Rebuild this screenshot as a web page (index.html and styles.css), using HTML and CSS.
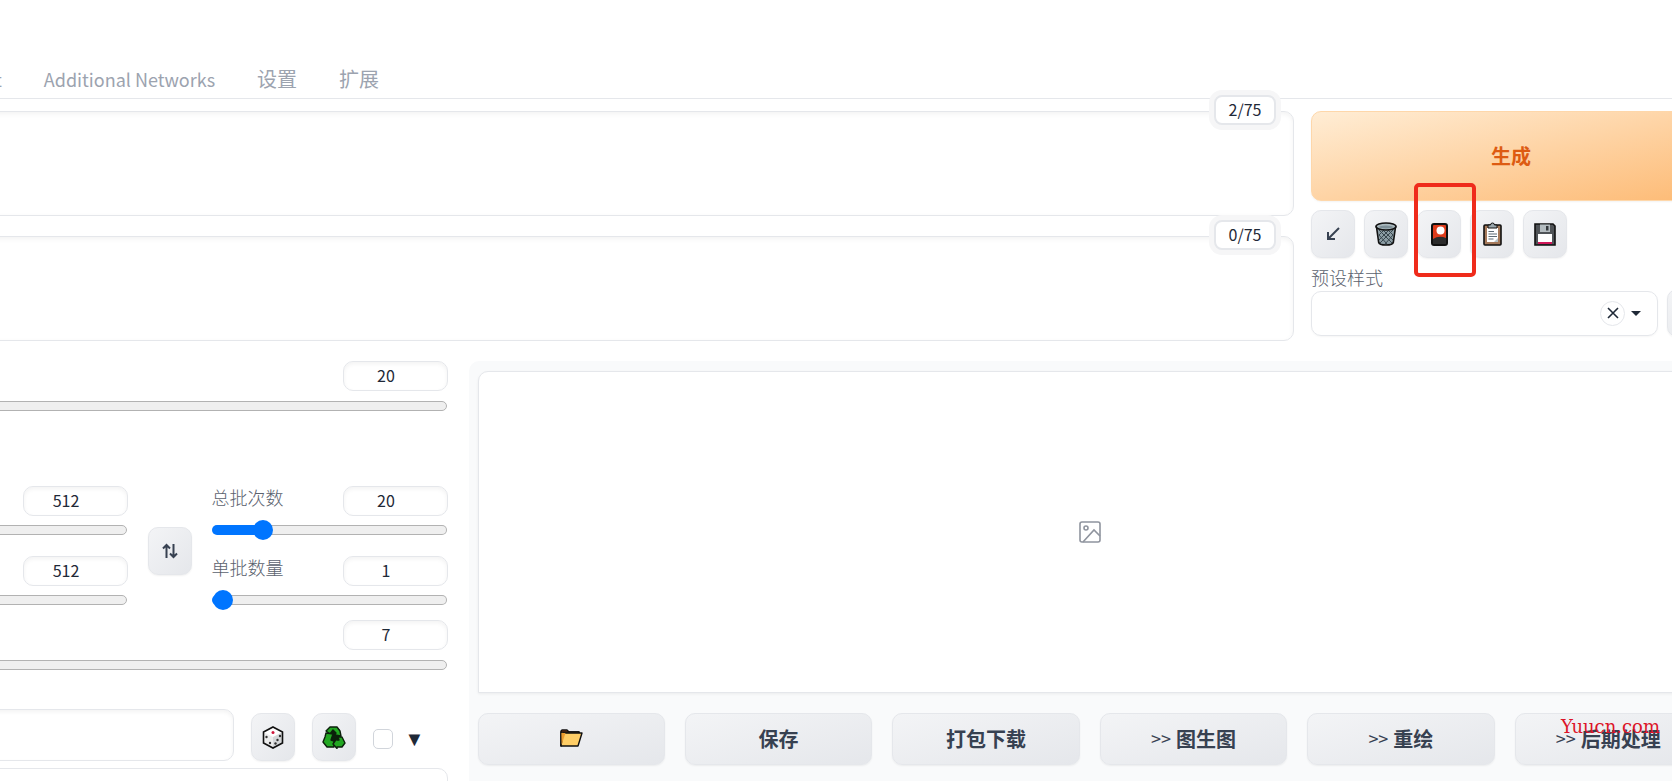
FILE: index.html
```html
<!DOCTYPE html>
<html lang="zh-CN">
<head>
<meta charset="UTF-8" />
<meta name="viewport" content="width=device-width, initial-scale=1" />
<title>Stable Diffusion</title>
<link rel="stylesheet" href="styles.css">
</head>
<body>

<div class="app">
  <nav class="tabs">
    <button class="latin">t</button>
    <button class="latin">Additional Networks</button>
    <button>设置</button>
    <button>扩展</button>
  </nav>

  <div class="top">
    <div class="prompts">
      <div class="prompt">
        <textarea aria-label="正向提示词"></textarea>
        <span class="counter">2/75</span>
      </div>
      <div class="prompt">
        <textarea aria-label="反向提示词"></textarea>
        <span class="counter">0/75</span>
      </div>
    </div>

    <div class="actions">
      <button class="generate">生成</button>
      <div class="tools">
        <button class="tool" aria-label="读取参数">
          <svg width="14" height="14" viewBox="0 0 14 14" fill="none" stroke="#374151" stroke-width="2"><path d="M13 1L3 11"/><path d="M2 5v7h7"/></svg>
        </button>
        <button class="tool" aria-label="清空">
          <svg width="22" height="24" viewBox="0 0 22 24"><path d="M1.500 5l2.200 15.500q.5 2.500 7.300 2.500t7.300-2.500L20.500 5z" fill="#8b9ca3" stroke="#111" stroke-width="1.600"/><path d="M4 8l13 13M8 8l10 10M13 8l5 5M4 13l8 9M18 8L5 21M14 8L4 18M9 8l-5 5M18 13l-8 9" stroke="#37464d" stroke-width="1"/><ellipse cx="11" cy="4.500" rx="10" ry="3.500" fill="#a9b8bd" stroke="#111" stroke-width="1.600"/><ellipse cx="11" cy="5" rx="7" ry="1.500" fill="#7d8f97"/></svg>
        </button>
        <button class="tool marked" aria-label="显示附加网络">
          <svg width="17" height="23" viewBox="0 0 17 23"><rect x="1" y="1" width="15" height="21" rx="2" fill="#e03c1b" stroke="#111" stroke-width="2"/><path d="M2 16q6-4 13-1v6H2z" fill="#2c2c2c"/><circle cx="9.500" cy="7.500" r="4" fill="#fff"/></svg>
        </button>
        <button class="tool" aria-label="应用样式">
          <svg width="19" height="24" viewBox="0 0 19 24"><rect x="1" y="3" width="17" height="20" rx="1" fill="#a5795a" stroke="#111" stroke-width="1.600"/><path d="M4 6h11v14H4z" fill="#fff"/><path d="M5 6V3h2.500q0-2 2-2t2 2H14v3z" fill="#9aa7ad" stroke="#111"/><path d="M5.500 9.500H11M5.500 12H14M5.500 14.500H14M5.500 17h5" stroke="#5c6b75" stroke-width="1.200"/><path d="M11 20l4-4v4z" fill="#b7c2c8"/></svg>
        </button>
        <button class="tool" aria-label="保存样式">
          <svg width="22" height="23" viewBox="0 0 22 23"><path d="M1 1h18l2 2v19H1z" fill="#4f5357" stroke="#111" stroke-width="1.600"/><path d="M6 1.500h10V9H6z" fill="#b4bcc0"/><path d="M12 3h2.500v4.500H12z" fill="#34383c"/><path d="M4 11h14v9H4z" fill="#fff"/><path d="M4 19h14v2H4z" fill="#d0175a"/></svg>
        </button>
      </div>
      <label class="styles-label" for="styles">预设样式</label>
      <div class="styles-row">
        <div class="dropdown">
          <input id="styles" type="text">
          <button class="clear" aria-label="清除">
            <svg width="12" height="12" viewBox="0 0 12 12" stroke="#1f2937" stroke-width="1.600"><path d="M1 1l10 10M11 1L1 11"/></svg>
          </button>
          <svg width="10" height="5" viewBox="0 0 10 5"><path d="M0 0h10L5 5z" fill="#1f2937"/></svg>
        </div>
        <button class="tool" aria-label="刷新"></button>
      </div>
    </div>
  </div>

  <div class="main">
    <div class="settings">
      <div class="slider">
        <div class="slider-head"><input type="number" value="20" aria-label="迭代步数"></div>
        <input type="range" min="1" max="150" value="20" aria-label="迭代步数" style="--fill: 13%">
      </div>

      <div class="size-row">
        <div class="stack">
          <div class="slider">
            <div class="slider-head"><input type="number" value="512" aria-label="宽度"></div>
            <input type="range" min="64" max="2048" value="512" aria-label="宽度" style="--fill: 23%">
          </div>
          <div class="slider">
            <div class="slider-head"><input type="number" value="512" aria-label="高度"></div>
            <input type="range" min="64" max="2048" value="512" aria-label="高度" style="--fill: 23%">
          </div>
        </div>
        <button class="tool swap" aria-label="交换宽高">
          <svg width="16" height="16" viewBox="0 0 16 16" fill="none" stroke="#374151" stroke-width="2"><path d="M4.500 15V2M1 5.500L4.500 2 8 5.500"/><path d="M11.500 1v13M8 10.500l3.500 3.500 3.500-3.500"/></svg>
        </button>
        <div class="stack batch">
          <div class="slider">
            <div class="slider-head"><label for="count">总批次数</label><input id="count" type="number" value="20"></div>
            <input type="range" min="1" max="100" value="20" aria-label="总批次数" style="--fill: 21%">
          </div>
          <div class="slider">
            <div class="slider-head"><label for="size">单批数量</label><input id="size" type="number" value="1"></div>
            <input type="range" min="1" max="8" value="1" aria-label="单批数量" style="--fill: 3%">
          </div>
        </div>
      </div>

      <div class="slider">
        <div class="slider-head"><input type="number" value="7" aria-label="提示词相关性"></div>
        <input type="range" min="1" max="30" value="7" aria-label="提示词相关性" style="--fill: 21%">
      </div>

      <div class="seed-row">
        <input class="seed" type="text" aria-label="随机种子">
        <button class="tool" aria-label="随机">
          <svg width="22" height="23" viewBox="0 0 22 23"><path d="M11 1l9.500 5v11L11 22l-9.500-5V6z" fill="#fff"/><path d="M11 11l9.500-5v11L11 22z" fill="#d5d7d9"/><path d="M1.500 6l9.500 5v11l-9.500-5z" fill="#ececec"/><path d="M11 1l9.500 5v11L11 22l-9.500-5V6z" fill="none" stroke="#111" stroke-width="1.600"/><circle cx="11" cy="6.500" r="1.500" fill="#d0173c"/><g fill="#333"><circle cx="4.500" cy="11" r="1.200"/><circle cx="8" cy="17" r="1.200"/><circle cx="13.500" cy="17.500" r="1.200"/><circle cx="15.500" cy="14" r="1.200"/><circle cx="18" cy="10" r="1.200"/></g></svg>
        </button>
        <button class="tool" aria-label="重用种子">
          <svg width="24" height="24" viewBox="0 0 24 24" stroke="#0b1f0b" stroke-width="1.400" stroke-linejoin="round" fill="#22a722"><path d="M8 5h9l2 14H5z" fill="#0b1f0b"/><path d="M8 2h7l3 4 1 5-6-1 1-2-3-3-3 4-4-3z"/><path d="M4 8l7 1-2 6 3 1v6H5l-4-5 2-5z"/><path d="M16 12l4 0 3 6-3 4h-5v1.500L11 19l4-6v2h2z"/></svg>
        </button>
        <label class="extra"><input type="checkbox"><span>▼</span></label>
      </div>

      <div class="next-box"></div>
    </div>

    <div class="output">
      <div class="gallery">
        <svg width="22" height="22" viewBox="0 0 22 22" fill="none" stroke="#8f949e" stroke-width="1.600"><rect x="1" y="1" width="20" height="20" rx="2"/><circle cx="7" cy="7" r="2"/><path d="M4 21L15 9l6 6"/></svg>
      </div>
      <div class="output-buttons">
        <button aria-label="打开目录">
          <svg width="23" height="18" viewBox="0 0 23 18" stroke="#111" stroke-width="1.400" stroke-linejoin="round"><path d="M1 17V2l1-1h5l2 2h10v3" fill="#c9511b"/><path d="M1 17V3h18v3z" fill="#ed9c2d"/><path d="M1 17L3 4h19l-4 13z" fill="#ffce66"/><path d="M1.500 16V4h4z" fill="#ed9c2d" stroke="none"/></svg>
        </button>
        <button>保存</button>
        <button>打包下载</button>
        <button><span class="arrows">&gt;&gt;</span> 图生图</button>
        <button><span class="arrows">&gt;&gt;</span> 重绘</button>
        <button><span class="arrows">&gt;&gt;</span> 后期处理</button>
      </div>
    </div>
  </div>
</div>

<div class="watermark">Yuucn.com</div>

</body>
</html>
```
FILE: styles.css
```css
*, *::before, *::after {
  box-sizing: border-box;
}
html, body {
  margin: 0;
  height: 100%;
  overflow: hidden;
}
body {
  position: relative;
  background: #fff;
  color: #1f2937;
  font-family: "Noto Sans CJK SC", sans-serif;
  font-size: 16px;
}
button, input, textarea {
  font: inherit;
  color: inherit;
  margin: 0;
}
button {
  cursor: pointer;
}
svg {
  display: block;
  flex: none;
}

/* the app runs past both sides of the window */
.app {
  margin: 0 -39px 0 -795px;
}

.tabs {
  display: flex;
  gap: 2px;
  height: 99px;
  padding: 60px 0 0 770px;
  border-bottom: 1px solid #e5e7eb;
}
.tabs button {
  border: none;
  background: none;
  padding: 0 20px;
  color: #9ca3af;
  font-size: 20px;
  line-height: 36px;
}
.tabs .latin {
  font-size: 18px;
}

.top {
  display: grid;
  grid-template-columns: 1fr 400px;
  gap: 17px;
  margin-top: 12px;
}
.prompts {
  display: flex;
  flex-direction: column;
  gap: 20px;
}
.prompt {
  position: relative;
}
.prompt textarea {
  display: block;
  width: 100%;
  height: 105px;
  border: 1px solid #e5e7eb;
  border-radius: 10px;
  box-shadow: inset 0 2px 5px rgba(0,0,0,0.05);
  resize: none;
  outline: none;
}
.counter {
  position: absolute;
  top: -16px;
  right: 18px;
  width: 62px;
  height: 30px;
  line-height: 24px;
  text-align: center;
  background: #fff;
  border: 2px solid #e5e7eb;
  border-radius: 8px;
  box-shadow: 0 0 0 5px #f6f6f7;
}

.generate {
  display: block;
  width: 100%;
  height: 90px;
  padding: 0 0 2px;
  border: 1px solid #fed7aa;
  border-radius: 10px;
  background: linear-gradient(to bottom right, #ffedd5, #fdba74);
  color: #dd5b12;
  font-size: 20px;
  font-weight: bold;
  box-shadow: 0 1px 2px rgba(0,0,0,0.05);
}
.tools {
  display: flex;
  gap: 9px;
  margin-top: 9px;
}
.tool {
  position: relative;
  flex: none;
  display: flex;
  align-items: center;
  justify-content: center;
  width: 44px;
  height: 48px;
  padding: 0;
  border: 1px solid #e5e7eb;
  border-radius: 10px;
  background: linear-gradient(to bottom right, #f3f4f6, #e5e7eb);
  box-shadow: 0 1px 2px rgba(0,0,0,0.06);
}
.marked::after {
  content: "";
  position: absolute;
  left: -4px;
  top: -28px;
  width: 62px;
  height: 94px;
  border: 4px solid #ef2b1b;
  border-radius: 5px;
  z-index: 2;
}
.styles-label {
  display: block;
  margin-top: 7px;
  line-height: 24px;
}
label {
  color: #5b626e;
  font-size: 18px;
  font-weight: 300;
}
.styles-row {
  display: flex;
  align-items: center;
  gap: 9px;
}
.dropdown {
  flex: none;
  display: flex;
  align-items: center;
  gap: 11px;
  width: 347px;
  height: 45px;
  padding-right: 16px;
  border: 1px solid #e5e7eb;
  border-radius: 10px;
  box-shadow: 0 1px 2px rgba(0,0,0,0.04);
}
.dropdown input {
  flex: 1;
  min-width: 0;
  border: none;
  outline: none;
  background: none;
}
.clear {
  display: flex;
  align-items: center;
  justify-content: center;
  width: 25px;
  height: 25px;
  margin-right: -5px;
  padding: 0;
  border: 1px solid #e5e7eb;
  border-radius: 50%;
  background: #fff;
}

.main {
  display: grid;
  grid-template-columns: 1fr 1fr;
  gap: 21px;
  margin-top: 20px;
}
.slider-head {
  display: flex;
  justify-content: flex-end;
  height: 30px;
}
.slider-head label {
  margin-right: auto;
  line-height: 22px;
}
input[type="number"] {
  width: 105px;
  height: 30px;
  padding: 0 18px 2px 0;
  border: 1px solid #e5e7eb;
  border-radius: 10px;
  box-shadow: inset 0 2px 4px rgba(0,0,0,0.05);
  text-align: center;
  outline: none;
  appearance: textfield;
}
input[type="number"]::-webkit-inner-spin-button {
  appearance: none;
}
input[type="range"] {
  display: block;
  appearance: none;
  width: calc(100% - 1px);
  height: 20px;
  margin-top: 5px;
  background: none;
}
.stack input[type="range"] {
  margin-top: 4px;
}
input[type="range"]::-webkit-slider-runnable-track {
  height: 10px;
  border: 1px solid #b2b2b2;
  border-radius: 5px;
  background: linear-gradient(to right, #0075ff var(--fill), #efefef var(--fill));
}
.batch input[type="range"]::-webkit-slider-runnable-track {
  border-color: transparent;
  background:
    linear-gradient(to right, #0075ff var(--fill), #efefef var(--fill)) padding-box,
    linear-gradient(to right, #0075ff var(--fill), #b2b2b2 var(--fill)) border-box;
}
input[type="range"]::-webkit-slider-thumb {
  appearance: none;
  width: 20px;
  height: 20px;
  margin-top: -6px;
  border-radius: 50%;
  background: #0075ff;
}

.size-row {
  display: flex;
  align-items: center;
  gap: 20px;
  margin: 70px 0 10px;
}
.stack {
  flex: 1;
  display: flex;
  flex-direction: column;
  gap: 16px;
}
.batch {
  flex: 0 0 236px;
}
.swap {
  margin-top: 5px;
}

.seed-row {
  display: flex;
  align-items: flex-end;
  gap: 17px;
  margin-top: 34px;
}
.seed {
  flex: 1;
  height: 52px;
  border: 1px solid #e5e7eb;
  border-radius: 10px;
  box-shadow: inset 0 2px 4px rgba(0,0,0,0.05);
  outline: none;
}
.extra {
  display: flex;
  align-items: center;
  gap: 12px;
  width: 75px;
  height: 44px;
  color: #1f2937;
  line-height: 20px;
}
.extra input {
  appearance: none;
  width: 20px;
  height: 20px;
  border: 1px solid #d1d5db;
  border-radius: 5px;
  background: #fff;
}
.extra span {
  font-family: "DejaVu Sans", sans-serif;
  font-size: 20px;
}
.next-box {
  height: 60px;
  margin-top: 7px;
  border: 1px solid #e5e7eb;
  border-radius: 10px;
}

.output {
  padding: 10px 9px;
  border-radius: 10px;
  background: #f9fafb;
}
.gallery {
  display: flex;
  align-items: center;
  justify-content: center;
  height: 322px;
  border: 1px solid #e5e7eb;
  border-radius: 10px 10px 0 0;
  background: #fff;
  box-shadow: 0 1px 3px rgba(0,0,0,0.06);
}
.output-buttons {
  display: grid;
  grid-template-columns: repeat(6, 1fr);
  gap: 20px;
  margin-top: 20px;
}
.output-buttons button {
  display: flex;
  align-items: center;
  justify-content: center;
  gap: 5px;
  height: 52px;
  padding: 0 0 2px;
  border: 1px solid #e5e7eb;
  border-radius: 10px;
  background: linear-gradient(to bottom right, #f3f4f6, #e5e7eb);
  box-shadow: 0 1px 2px rgba(0,0,0,0.06);
  color: #374151;
  font-size: 20px;
  font-weight: bold;
}
.arrows {
  font-size: 18px;
  font-weight: normal;
}

.watermark {
  position: absolute;
  right: 12px;
  bottom: 43px;
  color: #dc1428;
  font-family: "DejaVu Serif", serif;
  font-size: 18px;
  line-height: 22px;
}
```
